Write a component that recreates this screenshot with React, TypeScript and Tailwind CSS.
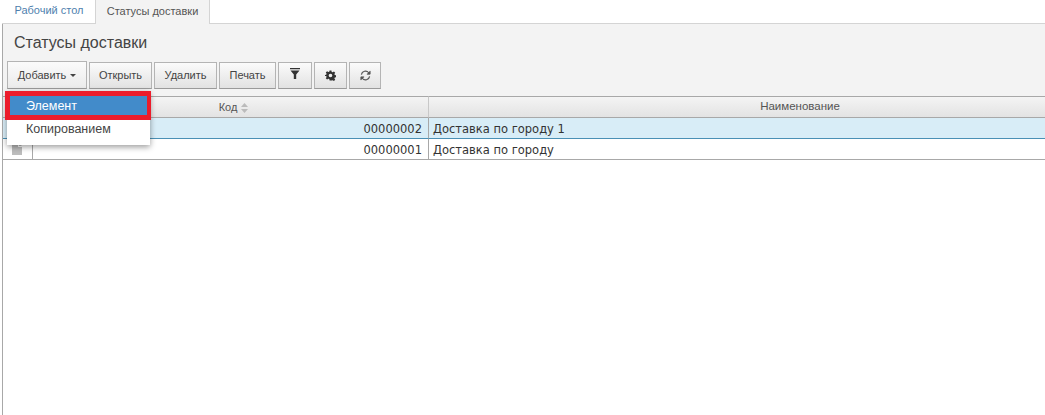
function ToolButton({ children, className = '' }: { children: React.ReactNode; className?: string }) {
  return (
    <button className={`h-[27px] flex items-center justify-center border border-[#b4b4b4] border-b-[#9a9a9a] bg-gradient-to-b from-[#fbfbfb] to-[#e2e2e2] text-[11px] text-[#444] ${className}`}>
      {children}
    </button>
  )
}

function FileIcon() {
  return (
    <svg width="10" height="12" viewBox="0 0 10 12" className="block">
      <path d="M0 0h6v4h4v8H0z M7 0l3 3H7z" fill="#bdbdbd" />
    </svg>
  )
}

function SortIcon() {
  return (
    <svg width="7" height="10" viewBox="0 0 7 10" className="ml-[4px] mt-[1px]">
      <path d="M3.500 0L7 4H0z M0 6h7L3.500 10z" fill="#bbb" />
    </svg>
  )
}

export default function App() {
  return (
    <div className="relative w-[1045px] h-[415px] overflow-hidden bg-white pl-[2px] flex flex-col font-['Liberation_Sans',sans-serif] text-[#333]">
      {/* tabs */}
      <div className="flex h-[24px] pl-[1px] border-b border-[#d4d4d4] shrink-0">
        <div className="w-[92px] flex items-center justify-center text-[11px] text-[#4f7fae] pb-[2px]">
          Рабочий стол
        </div>
        <div className="w-[115px] h-[24px] flex items-center justify-center bg-[#f3f3f3] border-x border-[#d4d4d4] text-[11px] text-[#555] pb-[2px]">
          Статусы доставки
        </div>
      </div>

      <div className="flex-1 flex flex-col min-w-0 border-l border-[#a8a8a8]">
        {/* title and toolbar */}
        <div className="bg-[#f3f3f3] h-[72px] pl-[4px] shrink-0">
          <h1 className="text-[16px] leading-[20px] pl-[7px] pt-[9px] text-[#444]">Статусы доставки</h1>
          <div className="flex gap-[2px] items-start mt-[9px]">
            <ToolButton className="w-[80px] h-[28px] -mt-[1px] from-[#ebebeb] to-[#ebebeb] text-[11.5px]">
              Добавить
              <span className="ml-[4px] mt-[1px] border-x-[3px] border-x-transparent border-t-[3px] border-t-[#444]" />
            </ToolButton>
            <ToolButton className="w-[63px]">Открыть</ToolButton>
            <ToolButton className="w-[63px]">Удалить</ToolButton>
            <ToolButton className="w-[57px]">Печать</ToolButton>
            <ToolButton className="w-[34px]">
              <svg width="10" height="11" viewBox="0 0 10 11" className="mb-[4px]">
                <path d="M0 0h10v1.200H0z M0.500 2.500h9L6.200 6.500V11H3.800V6.500z" fill="#333" />
              </svg>
            </ToolButton>
            <ToolButton className="w-[33px]">
              <svg width="11" height="11" viewBox="0 0 24 24">
                <path
                  fillRule="evenodd"
                  fill="#333"
                  d="M10 1h4l.7 3.200 2 .9L19.500 3.300l2.800 2.800-1.800 2.800.9 2 3.200.7v4l-3.200.7-.9 2 1.800 2.800-2.800 2.800-2.800-1.800-2 .9L14 23h-4l-.7-3.200-2-.9-2.800 1.800-2.800-2.800 1.800-2.800-.9-2L-.6 13V11l3.200-.7.9-2L1.700 5.500 4.500 2.700l2.800 1.800 2-.9z M12 8a4 4 0 100 8 4 4 0 000-8z"
                />
              </svg>
            </ToolButton>
            <ToolButton className="w-[32px]">
              <svg width="11" height="11" viewBox="0 0 24 24" fill="none" stroke="#555" strokeWidth="2.600">
                <path d="M3 10a9 9 0 0116-4l2 2" />
                <path d="M21 14a9 9 0 01-16 4l-2-2" />
                <path d="M22 2v7h-7" strokeWidth="2" fill="#555" />
                <path d="M2 22v-7h7" strokeWidth="2" fill="#555" />
              </svg>
            </ToolButton>
          </div>
        </div>

        {/* table */}
        <div className="grid grid-cols-[30px_396px_1fr]">
          <div className="h-[22px] border-y border-[#a8a8a8] bg-gradient-to-b from-[#f4f4f4] to-[#e3e3e3] col-span-2 flex items-center justify-center border-r border-r-[#c8c8c8] text-[11px] text-[#555] pl-[36px]">
            Код
            <SortIcon />
          </div>
          <div className="h-[22px] border-y border-[#a8a8a8] bg-gradient-to-b from-[#f4f4f4] to-[#e3e3e3] flex items-center justify-center text-[11.5px] text-[#555] pl-[126px]">
            Наименование
          </div>

          <div className="h-[21px] bg-[#d8edf7] border-b border-[#4a90b5]" />
          <div className="h-[21px] bg-[#d8edf7] border-b border-r border-b-[#4a90b5] border-r-[#a8a8a8] flex items-center justify-end pr-[6px] pt-[3px] font-['DejaVu_Sans',sans-serif] text-[11.5px]">
            00000002
          </div>
          <div className="h-[21px] bg-[#d8edf7] border-b border-[#4a90b5] flex items-center pl-[4px] pt-[3px] font-['DejaVu_Sans',sans-serif] text-[11.5px]">
            Доставка по городу 1
          </div>

          <div className="h-[21px] border-b border-r border-[#a8a8a8] flex items-center justify-center pr-[2px]">
            <FileIcon />
          </div>
          <div className="h-[21px] border-b border-r border-[#a8a8a8] flex items-center justify-end pr-[6px] pt-[3px] font-['DejaVu_Sans',sans-serif] text-[11.5px]">
            00000001
          </div>
          <div className="h-[21px] border-b border-[#a8a8a8] flex items-center pl-[4px] pt-[3px] font-['DejaVu_Sans',sans-serif] text-[11.5px]">
            Доставка по городу
          </div>
        </div>
      </div>

      {/* dropdown menu */}
      <div className="absolute left-[7px] top-[91px] w-[143px] h-[54px] bg-white shadow-[0_2px_6px_rgba(0,0,0,0.4)]">
        <div className="h-[29px] w-[146px] -ml-[2px] border-[5px] border-r-[4px] border-[#ec1c2b] bg-[#428bca] flex items-center pl-[16px] pt-[1px] text-[12.5px] text-white">
          Элемент
        </div>
        <div className="h-[25px] flex items-center pl-[19px] pb-[6px] text-[12.5px] text-[#444]">Копированием</div>
      </div>
    </div>
  )
}
